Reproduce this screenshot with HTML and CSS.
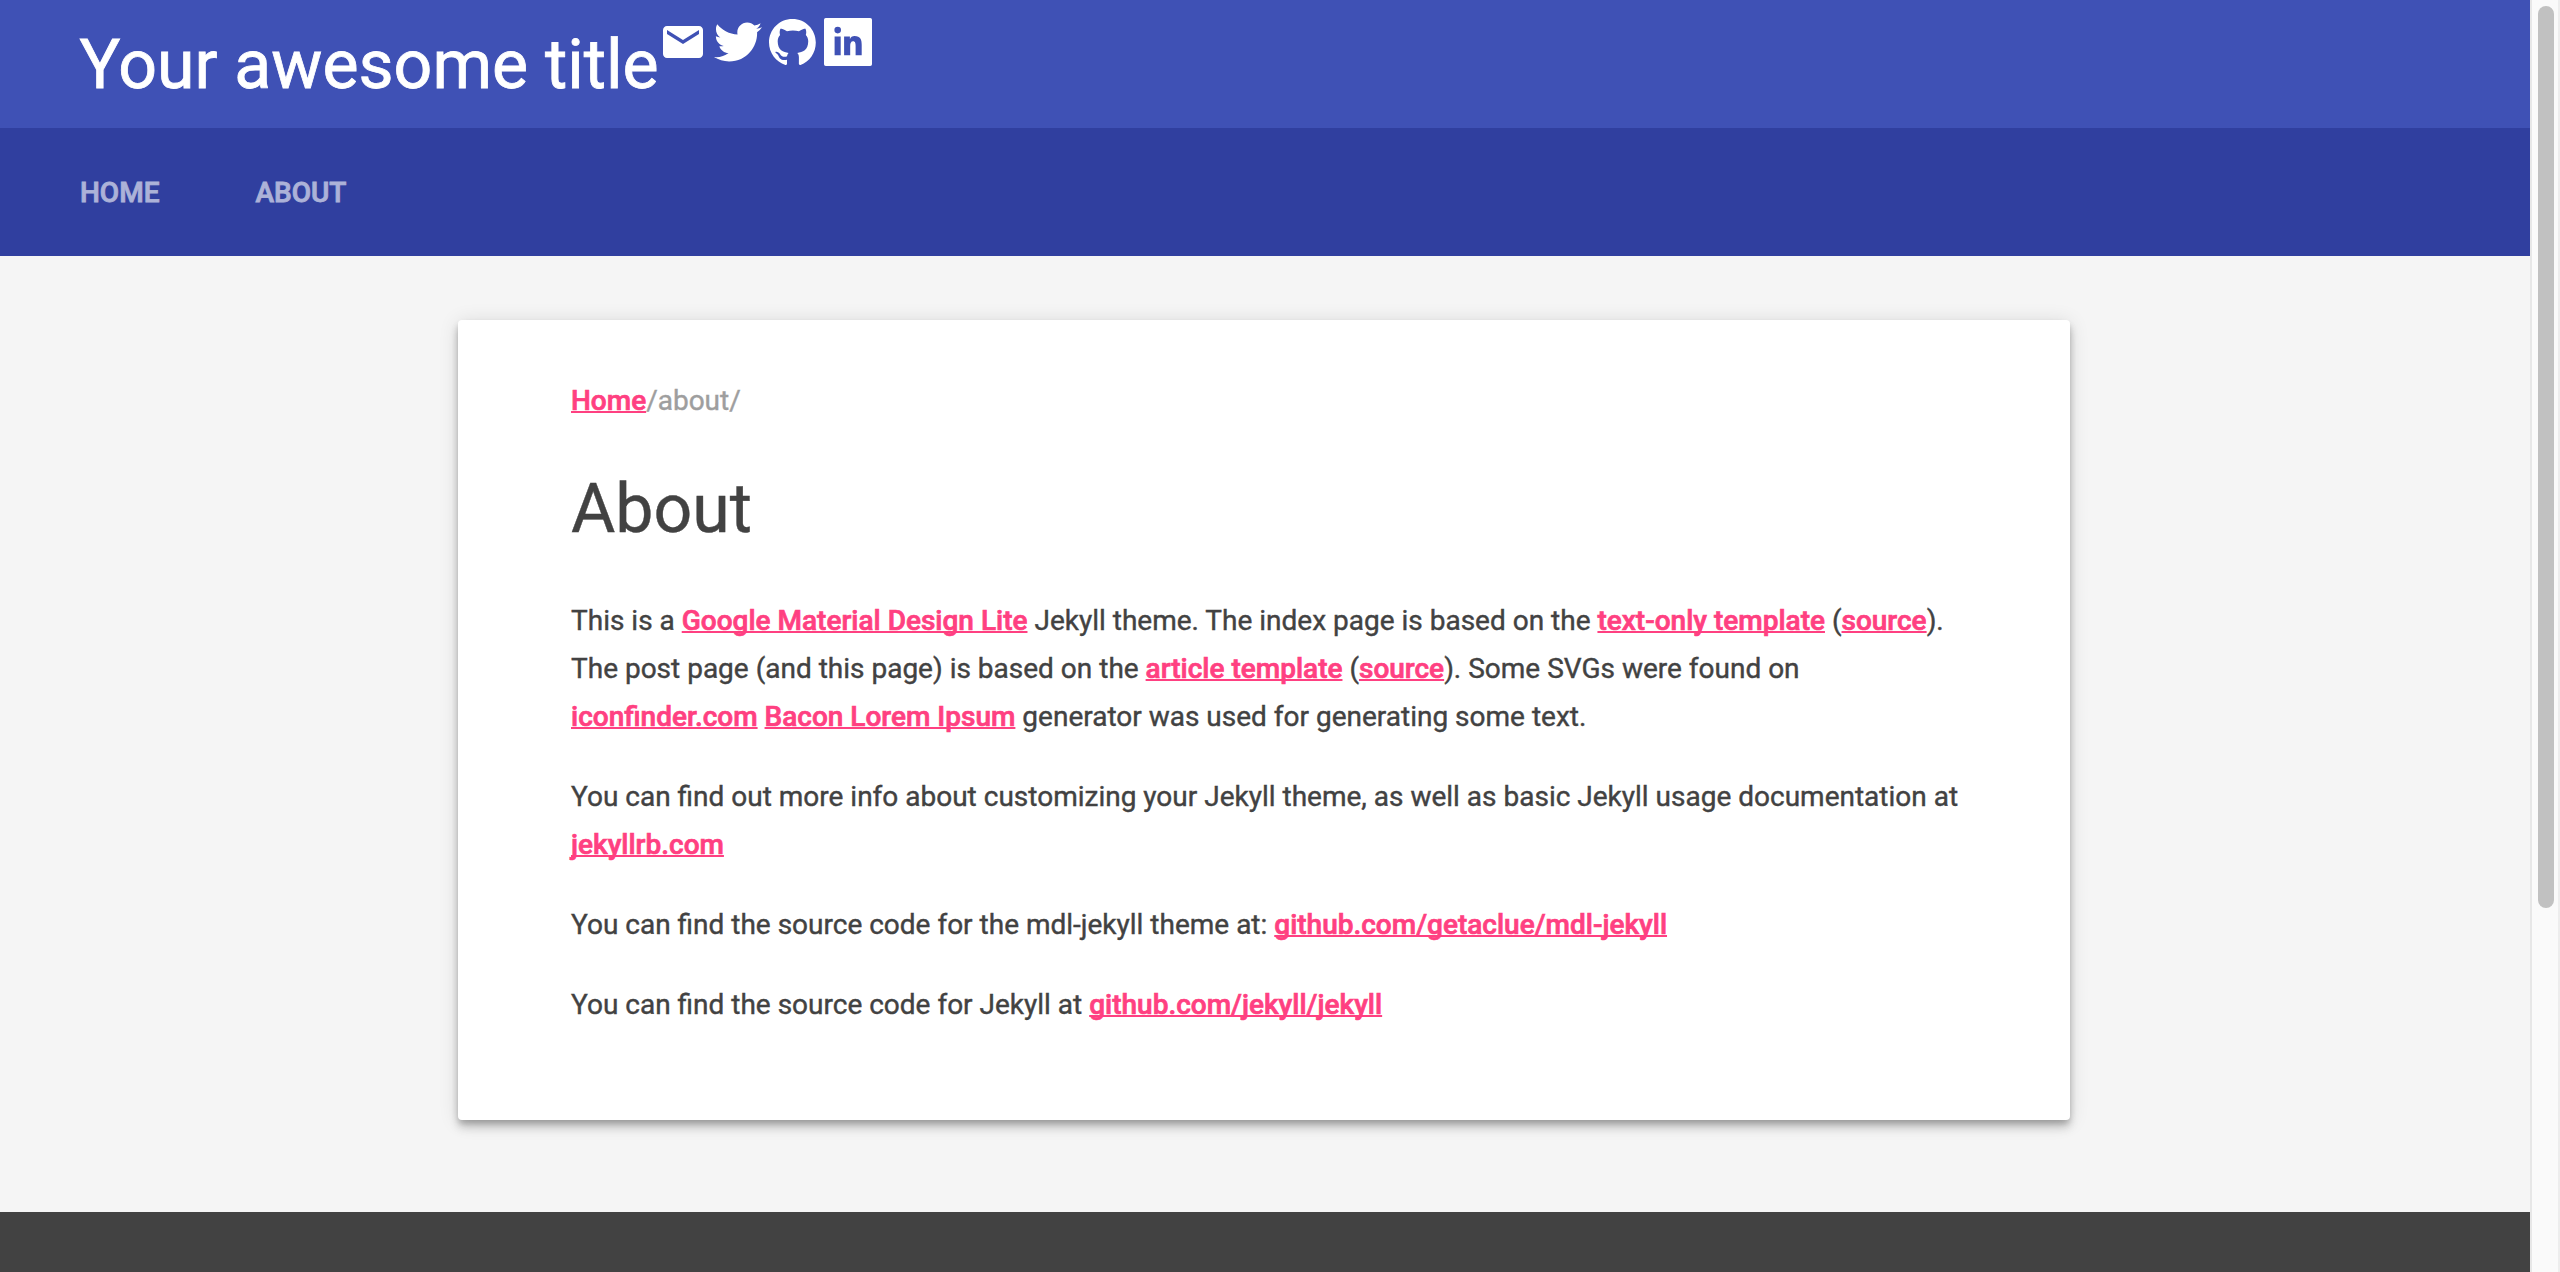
FILE: index.html
```html
<!DOCTYPE html>
<html lang="en">
<head>
<meta charset="utf-8">
<title>About</title>
<link rel="stylesheet" href="styles.css">
</head>
<body>
<div class="window">
  <div class="page">
    <header class="header">
      <h3 class="site-title">Your awesome title</h3>
      <div class="social">
        <svg class="icon" viewBox="0 0 24 24"><path d="M20 4H4c-1.100 0-1.990.9-1.990 2L2 18c0 1.100.9 2 2 2h16c1.100 0 2-.9 2-2V6c0-1.100-.9-2-2-2zm0 4l-8 5-8-5V6l8 5 8-5v2z"/></svg>
        <svg class="icon" viewBox="0 0 24 24"><path d="M23.954 4.569c-.885.389-1.830.654-2.825.775 1.014-.611 1.794-1.574 2.163-2.723-.951.555-2.005.959-3.127 1.184-.896-.959-2.173-1.559-3.591-1.559-2.717 0-4.920 2.203-4.920 4.917 0 .390.045.765.127 1.124C7.691 8.094 4.066 6.130 1.640 3.161c-.427.722-.666 1.561-.666 2.475 0 1.710.870 3.213 2.188 4.096-.807-.026-1.566-.248-2.228-.616v.061c0 2.385 1.693 4.374 3.946 4.827-.413.111-.849.171-1.296.171-.314 0-.615-.030-.916-.086.631 1.953 2.445 3.377 4.604 3.417-1.680 1.319-3.809 2.105-6.102 2.105-.390 0-.779-.023-1.170-.067 2.189 1.394 4.768 2.209 7.557 2.209 9.054 0 13.999-7.496 13.999-13.986 0-.209 0-.420-.015-.630.961-.689 1.800-1.560 2.460-2.548z"/></svg>
        <svg class="icon" viewBox="0.3 0 24 24"><path d="M12 .5C5.370.5.300 5.780.300 12.292c0 5.211 3.438 9.630 8.205 11.188.6.111.820-.254.820-.567 0-.280-.010-1.022-.015-2.005-3.338.711-4.042-1.582-4.042-1.582-.546-1.361-1.335-1.725-1.335-1.725-1.087-.731.084-.716.084-.716 1.205.082 1.838 1.215 1.838 1.215 1.070 1.803 2.809 1.282 3.495.981.108-.763.417-1.282.760-1.577-2.665-.295-5.466-1.309-5.466-5.827 0-1.287.465-2.339 1.235-3.164-.135-.298-.540-1.497.105-3.121 0 0 1.005-.316 3.300 1.209.960-.262 1.980-.392 3-.398 1.020.006 2.040.136 3 .398 2.280-1.525 3.285-1.209 3.285-1.209.645 1.624.240 2.823.120 3.121.765.825 1.230 1.877 1.230 3.164 0 4.530-2.805 5.527-5.475 5.817.420.354.810 1.077.810 2.182 0 1.578-.015 2.846-.015 3.229 0 .309.210.678.825.560C20.565 21.917 23.700 17.495 23.700 12.292 23.700 5.780 18.627.5 12 .5"/></svg>
        <svg class="icon" viewBox="0 0 24 24"><path fill-rule="evenodd" d="M.9 0h22.200a.9.9 0 0 1 .9.9v22.200a.9.9 0 0 1-.9.9H.9a.9.9 0 0 1-.9-.9V.9a.9.9 0 0 1 .9-.9zM6.850 4.400a1.650 1.650 0 1 0 0 3.300 1.650 1.650 0 0 0 0-3.300zM5.300 9.250v9.400h3.050v-9.400zM10.050 9.250v9.400h3.050V14c0-1.300.35-2.350 1.450-2.350s1.250 1.150 1.250 2.350v4.650h3.050V13.500c0-2.550-.6-4.450-3.550-4.450-1.200 0-2 .650-2.300 1.450h-.05V9.250z"/></svg>
      </div>
    </header>
    <nav class="nav">
      <a class="nav-link">HOME</a>
      <a class="nav-link">ABOUT</a>
    </nav>
    <main class="main">
      <article class="card">
        <div class="crumbs"><a class="link">Home</a>/about/</div>
        <h3 class="heading">About</h3>
        <p class="text">This is a <a class="link">Google Material Design Lite</a> Jekyll theme. The index page is based on the <a class="link">text-only template</a> (<a class="link">source</a>). The post page (and this page) is based on the <a class="link">article template</a> (<a class="link">source</a>). Some SVGs were found on <a class="link">iconfinder.com</a> <a class="link">Bacon Lorem Ipsum</a> generator was used for generating some text.</p>
        <p class="text">You can find out more info about customizing your Jekyll theme, as well as basic Jekyll usage documentation at <a class="link">jekyllrb.com</a></p>
        <p class="text">You can find the source code for the mdl-jekyll theme at: <a class="link">github.com/getaclue/mdl-jekyll</a></p>
        <p class="text">You can find the source code for Jekyll at <a class="link">github.com/jekyll/jekyll</a></p>
      </article>
    </main>
    <footer class="footer"></footer>
  </div>
  <div class="scrollbar"><div class="thumb"></div></div>
</div>
</body>
</html>
```
FILE: styles.css
```css
* { box-sizing: border-box; }
body {
  margin: 0;
  background: #f5f5f5;
  color: #424242;
  font-family: Roboto, sans-serif;
  font-size: 28px;
  line-height: 48px;
  -webkit-text-stroke: .4px currentColor;
}
.window { display: flex; height: 1272px; overflow: hidden; }
.page { flex: 1; display: flex; flex-direction: column; }
.header {
  display: flex;
  height: 128px;
  padding: 0 79.5px;
  background: #3f51b5;
  color: #fff;
  -webkit-text-stroke: .8px #fff;
}
.site-title {
  margin: 0;
  font-size: 68px;
  font-weight: 400;
  line-height: 130px;
  white-space: nowrap;
}
.social { display: flex; gap: 7px; padding-top: 18px; }
.icon { display: block; width: 48px; height: 48px; fill: #fff; }
.nav {
  display: flex;
  gap: 96px;
  height: 128px;
  padding: 0 80px;
  background: #303f9f;
  line-height: 130px;
}
.nav-link { color: #fff; opacity: .6; font-weight: 500; -webkit-text-stroke: .8px #fff; }
.main { height: 956px; padding-top: 64px; }
.card {
  width: 1612px;
  height: 800px;
  margin-left: 458px;
  padding: 57px 105px 0 113px;
  border-radius: 4px;
  background: #fff;
  box-shadow: 0 4px 4px 0 rgba(0,0,0,.06), 0 8px 10px 0 rgba(0,0,0,.14), 0 2px 20px 0 rgba(0,0,0,.12), 0 4px 8px -2px rgba(0,0,0,.2);
}
.crumbs { color: #9e9e9e; -webkit-text-stroke: .4px #9e9e9e; }
.link {
  color: #ff4081;
  font-weight: 500;
  -webkit-text-stroke: .7px #ff4081;
  text-decoration: underline;
  text-decoration-thickness: 2px;
  text-decoration-skip-ink: none;
}
.heading { margin: 44px 0 48px; font-size: 68px; font-weight: 400; line-height: 80px; }
.text { margin: 0 0 32px; }
.footer { flex: 1; background: #424242; }
.scrollbar {
  width: 30px;
  padding: 6px 4px 0 6px;
  border-left: 2px solid #e7e7e7;
  border-right: 2px solid #ededed;
  background: #fafafa;
}
.thumb { width: 16px; height: 902px; border-radius: 8px; background: #c1c1c1; }
```
